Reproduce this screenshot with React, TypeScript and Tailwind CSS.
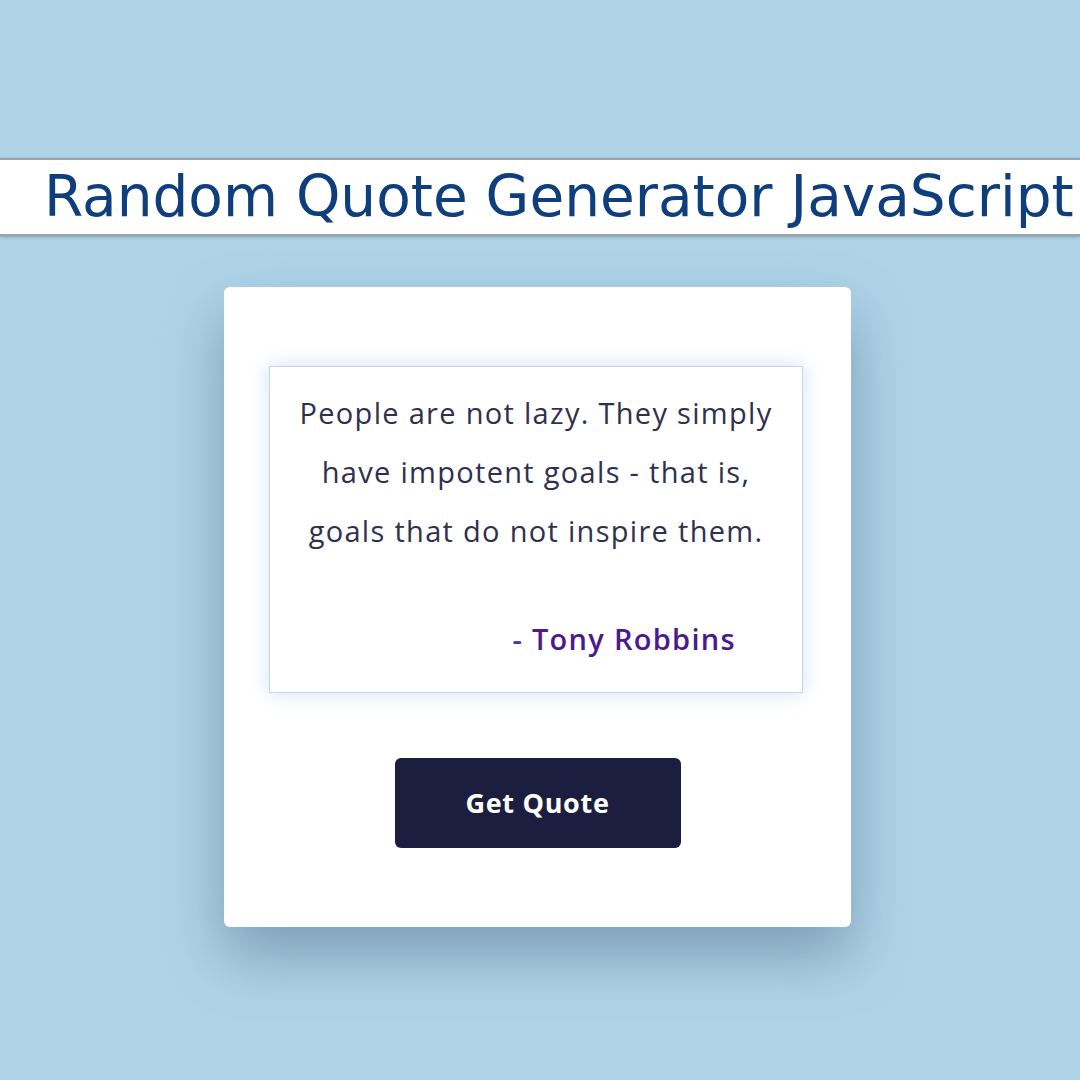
import React from "react";

const quoteLines = [
  "People are not lazy. They simply",
  "have impotent goals - that is,",
  "goals that do not inspire them.",
];
const author = "Tony Robbins";

const App = () => {
  return (
    <div className="min-h-[1080px] w-[1080px] bg-[#afd4e8] pt-[158px] overflow-hidden">
      <div className="h-[78px] bg-white border-y-2 border-[#9aa4ad] shadow-[0_1px_3px_rgba(0,0,0,0.25)] flex items-center pl-[44px]">
        <h1
          className="text-[56.5px] leading-none text-[#0f3e7c] whitespace-nowrap"
          style={{ fontFamily: '"DejaVu Sans", Verdana, sans-serif' }}
        >
          Random Quote Generator JavaScript
        </h1>
      </div>

      <div className="ml-[224px] mt-[51px] w-[627px] h-[640px] bg-white rounded-md shadow-[0_28px_60px_rgba(60,90,120,0.45)] pt-[79px] px-[45px]">
        <div
          className="w-[534px] h-[327px] border border-[#c7d5e6] shadow-[0_0_18px_rgba(120,170,230,0.35)] flex flex-col"
          style={{ fontFamily: '"Open Sans", "Noto Sans", sans-serif' }}
        >
          <p className="mt-[16px] text-center text-[29px] tracking-[1.3px] leading-[59px] text-[#2f3050]">
            {quoteLines.map((line) => (
              <span key={line} className="block">
                {line}
              </span>
            ))}
          </p>
          <p className="mt-[57px] pr-[66px] text-right text-[29px] tracking-[1.3px] font-semibold text-[#4b1a8c]">
            <span className="text-[#3a3aa0]">-</span> {author}
          </p>
        </div>

        <div className="flex justify-center mt-[65px]">
          <button
            className="w-[286px] h-[90px] rounded-md bg-[#1b1e3f] text-white text-[27px] tracking-[0.7px] font-bold"
            style={{ fontFamily: '"Open Sans", "Noto Sans", sans-serif' }}
          >
            Get Quote
          </button>
        </div>
      </div>
    </div>
  );
};

export default App;
